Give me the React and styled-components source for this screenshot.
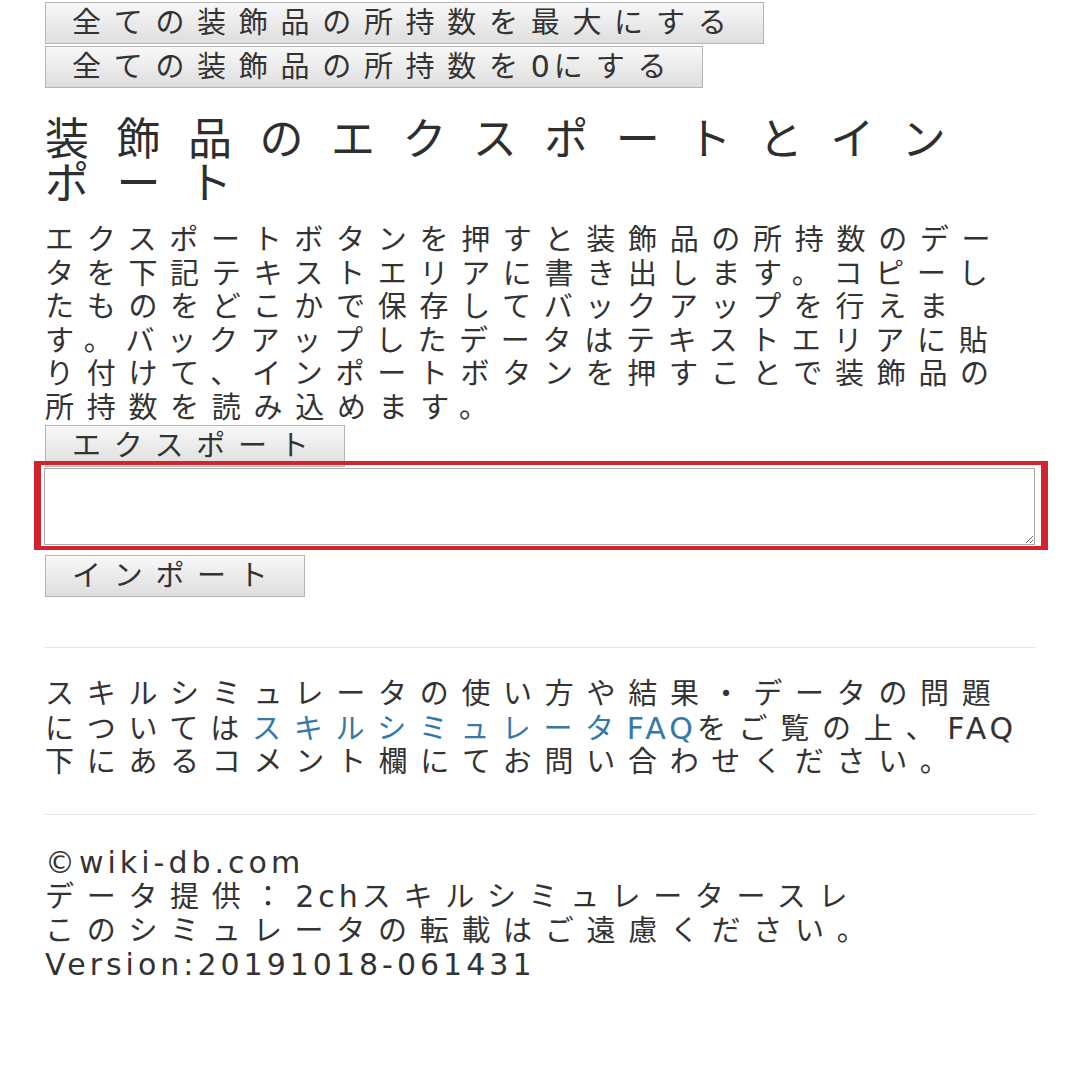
import React from 'react'
import styled, { createGlobalStyle } from 'styled-components'

const GlobalStyle = createGlobalStyle`
    body{
        margin: 0;
        background: #fff;
        color: #333;
        font-family: "DejaVu Sans", "Noto Sans CJK JP", sans-serif;
    }
`

const Page = styled.main`
    width: 990px;
    padding: 2px 0 60px 45px;
    font-size: 29px;
    letter-spacing: 12.7px;
`

const Latin = styled.span`
    font-size: 30px;
    letter-spacing: 4px;
`

const Button = styled.button`
    display: block;
    width: fit-content;
    height: 42px;
    margin: 0 0 ${p => p.gap || 0}px;
    padding: 0 23px 0 26px;
    border: 1px solid #b4b4b4;
    border-radius: 0;
    background: linear-gradient(#f8f8f8, #dedede);
    color: #333;
    font: inherit;
    font-size: 29px;
    line-height: 40px;
    letter-spacing: 12.7px;
    white-space: nowrap;
`

const Heading = styled.h2`
    margin: 30px 0 18px;
    font-size: 44px;
    font-weight: normal;
    line-height: 44px;
    letter-spacing: 27.5px;
    color: #2e2e2e;
`

const Text = styled.p`
    margin: 0;
    line-height: 33.5px;
`

const TextBox = styled.div`
    position: relative;
    width: 991px;
    margin: 1px 0 10px -1px;

    textarea{
        display: block;
        box-sizing: border-box;
        width: 100%;
        height: 77px;
        border: 1px solid #a9a9a9;
        resize: vertical;
        font: inherit;
    }

    /* red highlight frame around the text area */
    &::after{
        content: '';
        position: absolute;
        top: -7px;
        left: -10px;
        right: -13px;
        bottom: -5px;
        border: solid #d3232f;
        border-width: 4px 7px;
        pointer-events: none;
    }
`

const Rule = styled.hr`
    margin: ${p => p.top}px 0 ${p => p.bottom}px;
    border: 0;
    border-top: 1px solid #e6e6e6;
`

const Link = styled.a`
    color: #3479a8;
    text-decoration: none;
`

const Footer = styled.footer`
    line-height: 33.5px;

    div{
        white-space: nowrap;
    }
`

const App = () => {
    return (
        <Page>
            <GlobalStyle />

            <Button gap={2}>全ての装飾品の所持数を最大にする</Button>
            <Button>全ての装飾品の所持数を<Latin>0</Latin>にする</Button>

            <Heading>装飾品のエクスポートとインポート</Heading>

            <Text>
                エクスポートボタンを押すと装飾品の所持数のデータを下記テキストエリアに書き出します。コピーしたものをどこかで保存してバックアップを行えます。バックアップしたデータはテキストエリアに貼り付けて、インポートボタンを押すことで装飾品の所持数を読み込めます。
            </Text>
            <Button>エクスポート</Button>
            <TextBox>
                <textarea />
            </TextBox>
            <Button>インポート</Button>

            <Rule top={50} bottom={30} />

            <Text>
                スキルシミュレータの使い方や結果・データの問題については<Link href="#">スキルシミュレータ<Latin>FAQ</Latin></Link>をご覧の上、<Latin>FAQ</Latin>下にあるコメント欄にてお問い合わせください。
            </Text>

            <Rule top={34} bottom={31} />

            <Footer>
                <div><Latin>©wiki-db.com</Latin></div>
                <div>データ提供：<Latin>2ch</Latin>スキルシミュレータースレ</div>
                <div>このシミュレータの転載はご遠慮ください。</div>
                <div><Latin>Version:20191018-061431</Latin></div>
            </Footer>
        </Page>
    )
}

export default App
